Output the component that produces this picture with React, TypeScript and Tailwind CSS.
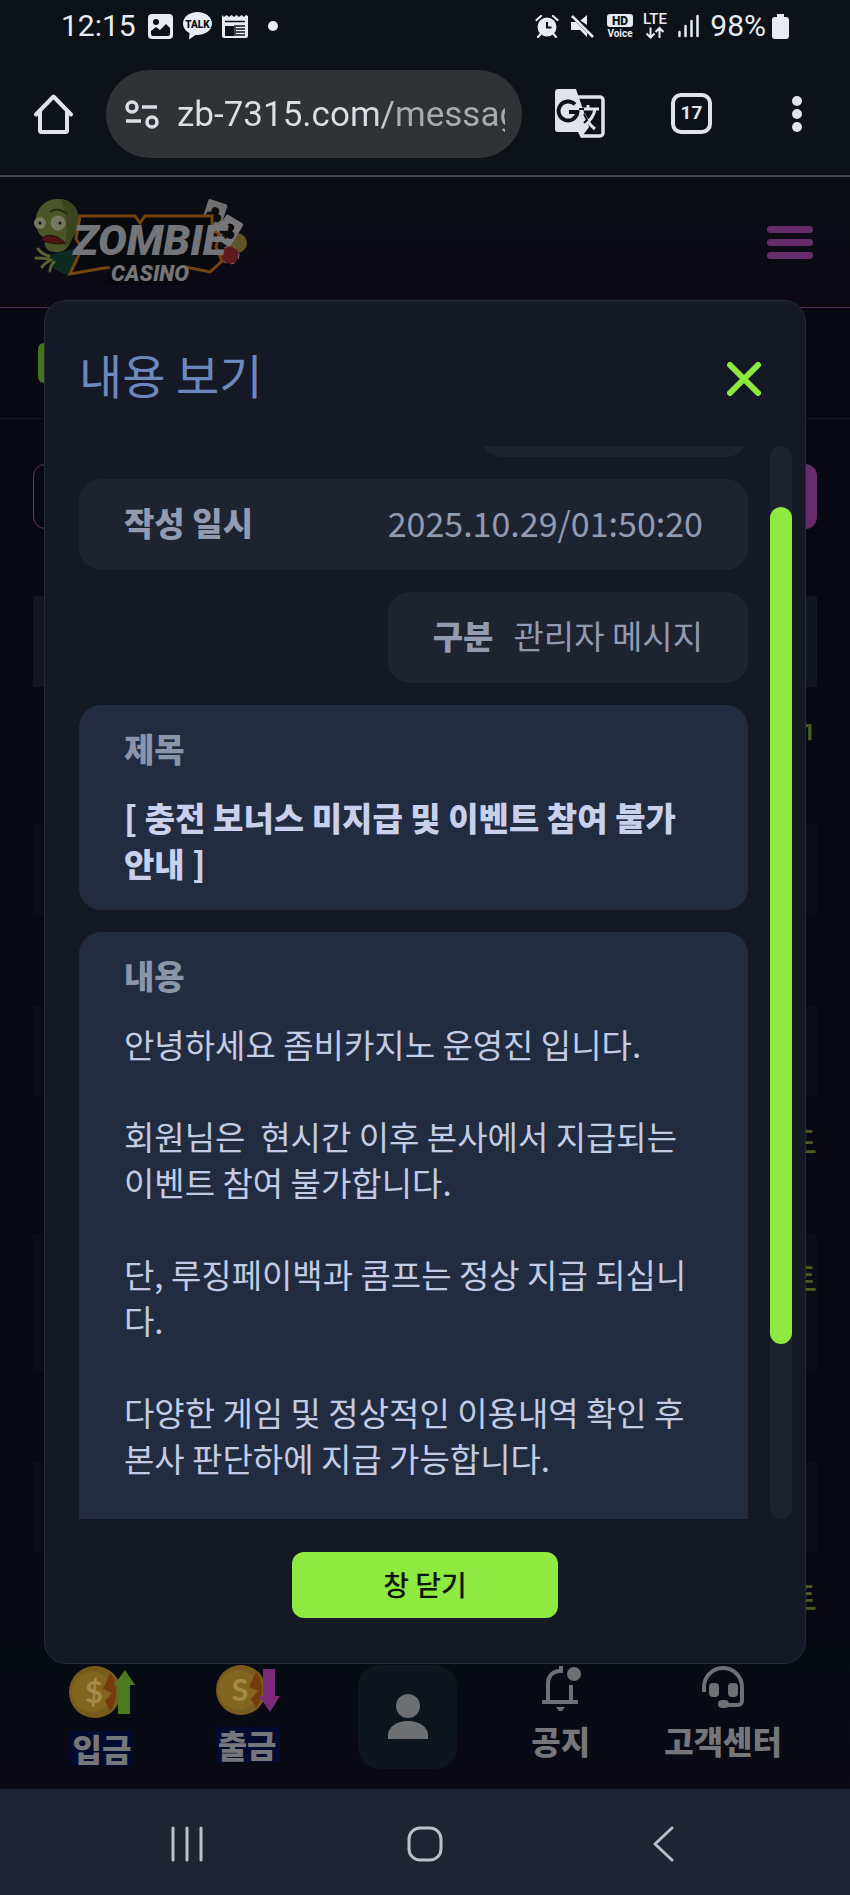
import { useState } from 'react';

const NOTICE_BODY = `안녕하세요 좀비카지노 운영진 입니다.

회원님은  현시간 이후 본사에서 지급되는 이벤트 참여 불가합니다.

단, 루징페이백과 콤프는 정상 지급 되십니다.

다양한 게임 및 정상적인 이용내역 확인 후 본사 판단하에 지급 가능합니다.`;

interface MessageRow {
  id: number;
  title: string;
  tall?: boolean;
}

const ROWS: MessageRow[] = [
  { id: 1, title: 'ㄱ', tall: true },
  { id: 2, title: '' },
  { id: 3, title: '' },
  { id: 4, title: '' },
  { id: 5, title: '드', tall: true },
  { id: 6, title: '트', tall: true },
  { id: 7, title: '' },
  { id: 8, title: '' },
  { id: 9, title: '트' },
];

function StatusBar() {
  return (
    <div className="flex h-[52px] items-center justify-between pr-[61px] pl-[61px] font-['Roboto',sans-serif] text-[30px] leading-none text-[#e8ebf2]">
      <div className="flex items-center">
        <span>12:15</span>
        <svg className="ml-3 h-[25px] w-[25px]" viewBox="0 0 25 25">
          <rect width="25" height="25" rx="4" fill="#e8ebf2" />
          <circle cx="8" cy="8" r="3" fill="#0d1118" />
          <path d="M3 20v-3l5-4 4 3 6-6 4 4v6a2 2 0 0 1-2 2H5a2 2 0 0 1-2-2z" fill="#0d1118" />
        </svg>
        <svg className="ml-[10px] h-7 w-[29px]" viewBox="0 0 29 28">
          <path d="M14.500 0C22.500 0 29 5 29 11.500S22.500 23 14.500 23h-2L6 27.500 6.500 21C2.500 19 0 15.500 0 11.500 0 5 6.500 0 14.500 0z" fill="#e8ebf2" />
          <text x="14.500" y="15.500" textAnchor="middle" fontSize="10" fontWeight="900" fontFamily="Roboto, sans-serif" fill="#0d1118">TALK</text>
        </svg>
        <svg className="ml-[10px] h-[25px] w-[26px]" viewBox="0 0 26 25" fill="#e8ebf2">
          <path d="M0 1l2 2 2.500-2L7 3l2.500-2L12 3l2.500-2L17 3l2.500-2L22 3l2-2 2 1v20a2 2 0 0 1-2 2H2a2 2 0 0 1-2-2z" />
          <path d="M3 7.500h20M13 11v11M14 12h9M14 15h9M14 18h9M14 21h9" stroke="#0d1118" strokeWidth="1.500" />
          <path d="M3 12h9v10H3z" fill="#0d1118" />
        </svg>
        <span className="ml-5 h-[10px] w-[10px] rounded-full bg-[#e8ebf2]" />
      </div>
      <div className="flex items-center">
        <svg className="h-6 w-6" viewBox="0 0 24 24" fill="#e8ebf2">
          <circle cx="12" cy="13" r="9.500" />
          <path d="M1.500 6 6 2M22.500 6 18 2M5.500 20 3 23M18.500 20l2.500 3" stroke="#e8ebf2" strokeWidth="2.200" strokeLinecap="round" />
          <path d="M12 8v5.500h4.500" stroke="#0d1118" strokeWidth="2" fill="none" />
        </svg>
        <svg className="ml-[11px] h-6 w-6" viewBox="0 0 24 24" fill="#e8ebf2">
          <path d="M17 1v10L10.500 6.500zM1 8h5l11 11v4l-7-7H1z" />
          <path d="M2 2l21 21" stroke="#e8ebf2" strokeWidth="2.500" />
        </svg>
        <svg className="ml-3 h-6 w-7" viewBox="0 0 28 24">
          <rect x="1" width="26" height="13" rx="3" fill="#e8ebf2" />
          <text x="14" y="10.500" textAnchor="middle" fontSize="12" fontWeight="900" fontFamily="Roboto, sans-serif" fill="#0d1118">HD</text>
          <text x="14" y="22.500" textAnchor="middle" fontSize="10" fontWeight="700" fontFamily="Roboto, sans-serif" fill="#e8ebf2">Voice</text>
        </svg>
        <svg className="ml-2 h-[26px] w-[26px] overflow-visible" viewBox="0 0 26 26">
          <text x="13" y="11" textAnchor="middle" fontSize="15" fontWeight="500" fontFamily="Roboto, sans-serif" fill="#e8ebf2">LTE</text>
          <path d="M8.500 14.500v10M4.500 20.500l4 4 4-4M17.500 25V15M13.500 19l4-4 4 4" stroke="#e8ebf2" strokeWidth="2" fill="none" />
        </svg>
        <svg className="ml-[9px] h-6 w-6" viewBox="0 0 24 24">
          <path d="M2.500 22v-4M8.500 22V12M14.500 22V7M20.500 22V2" stroke="#e8ebf2" strokeWidth="2.500" strokeLinecap="round" />
        </svg>
        <span className="ml-[9px]">98%</span>
        <svg className="ml-[6px] h-[25px] w-[17px]" viewBox="0 0 17 25">
          <path d="M5 0h7v3h2a3 3 0 0 1 3 3v16a3 3 0 0 1-3 3H3a3 3 0 0 1-3-3V6a3 3 0 0 1 3-3h2z" fill="#e8ebf2" />
        </svg>
      </div>
    </div>
  );
}

function BrowserBar() {
  return (
    <div className="flex h-[125px] items-center border-b-2 border-[#44474d] pr-[48px] pl-[33px]">
      <button aria-label="Home">
        <svg className="h-[42px] w-[42px]" viewBox="0 0 42 42" fill="none" stroke="#e0e3ea" strokeWidth="4" strokeLinejoin="round" strokeLinecap="round">
          <path d="M3 21.500 20.500 3.500 38 21.500M7 18v19.500a1.500 1.500 0 0 0 1.500 1.500h24a1.500 1.500 0 0 0 1.500-1.500V18" />
        </svg>
      </button>
      <div className="ml-[31px] flex h-[88px] min-w-0 flex-1 items-center rounded-full bg-[#303236] pr-[17px] pl-[18px]">
        <svg className="h-9 w-9 shrink-0" viewBox="0 0 36 36" fill="none" stroke="#dadde5" strokeWidth="3.500">
          <circle cx="8" cy="11" r="5" />
          <path d="M18 11h15M2 25h15" />
          <circle cx="28" cy="26" r="5" />
        </svg>
        <input
          aria-label="Address"
          className="ml-[17px] w-full min-w-0 bg-linear-to-r from-[#dcdfe6] from-60% to-[#a9abb1] to-68% bg-clip-text pt-[3px] font-['Roboto',sans-serif] text-[35px] text-transparent outline-none"
          defaultValue="zb-7315.com/message"
        />
      </div>
      <button className="ml-[33px]" aria-label="Translate">
        <svg className="h-[50px] w-[50px]" viewBox="0 0 50 50">
          <path d="M22 8h23a3 3 0 0 1 3 3v33a3 3 0 0 1-3 3H26" fill="none" stroke="#e0e3ea" strokeWidth="3.500" />
          <path d="M3 0h18l13 38-8 11-3-6H3a3 3 0 0 1-3-3V3a3 3 0 0 1 3-3z" fill="#e0e3ea" />
          <path d="M20 15.500a9.500 9.500 0 1 0 2.500 7.500H14" fill="none" stroke="#0d1118" strokeWidth="3.800" />
          <path d="M24 20h20M33 16v4M40 20c-1 8-6 13-12 17M29 25c2 6 6 11 11 15" fill="none" stroke="#e0e3ea" strokeWidth="3" />
          <path d="M24 20h5M29 25l3 6-3 3" fill="none" stroke="#0d1118" strokeWidth="2" />
        </svg>
      </button>
      <button className="ml-[66px] flex h-[41px] w-[41px] items-center justify-center rounded-[10px] border-4 border-[#e0e3ea] font-['Roboto',sans-serif] text-[19px] font-bold text-[#e0e3ea]">
        17
      </button>
      <button className="ml-[79px] flex w-[11px] flex-col items-center gap-[3px]" aria-label="More">
        <span className="h-[10px] w-[10px] rounded-full bg-[#e0e3ea]" />
        <span className="h-[10px] w-[10px] rounded-full bg-[#e0e3ea]" />
        <span className="h-[10px] w-[10px] rounded-full bg-[#e0e3ea]" />
      </button>
    </div>
  );
}

function Logo() {
  return (
    <svg className="h-[90px] w-[216px]" viewBox="0 0 216 90">
      {/* zombie */}
      <path d="M17 58l24-6 6 24-14 2-14-8z" fill="#0c2a20" />
      <path d="M4 20C7 6 18 1 28 2c13 1 20 11 18 24-1 9-5 14-8 20-3 7-9 10-16 9-8-1-10-5-9-14-6-2-10-9-9-21z" fill="#4a5627" />
      <path d="M28 2c13 1 20 11 18 24-1 9-5 14-8 20l-6 4c3-12 6-30-4-48z" fill="#38451f" />
      <circle cx="8" cy="26" r="6" fill="#77785f" />
      <circle cx="26" cy="26" r="7.500" fill="#77785f" />
      <circle cx="8" cy="26" r="1.500" fill="#12100c" />
      <circle cx="28" cy="26" r="1.500" fill="#12100c" />
      <path d="M18 15c6-4 12-2 17 2" stroke="#242c12" strokeWidth="2" fill="none" />
      <path d="M9 43c4-7 16-6 24 3-7 2-17 0-24-3z" fill="#501513" stroke="#1a0c0b" />
      <path d="M6 52c3 4 7 6 11 7M4 61c4 0 8 0 13 1M10 70c2-3 5-5 9-7M18 74c0-4 2-7 4-9" stroke="#59612f" strokeWidth="3" strokeLinecap="round" fill="none" />
      {/* cards and chips */}
      <circle cx="205" cy="46" r="10" fill="#5f5425" />
      <circle cx="198" cy="58" r="9" fill="#5e1a1d" stroke="#757575" strokeDasharray="4 5" />
      <g transform="rotate(18 182 18)">
        <rect x="172" y="4" width="20" height="27" rx="2" fill="#6f6f70" />
        <circle cx="182" cy="14" r="4" fill="#0c0c0e" />
        <circle cx="178" cy="20" r="4" fill="#0c0c0e" />
        <circle cx="186" cy="20" r="4" fill="#0c0c0e" />
        <path d="M182 16l3 10h-6z" fill="#0c0c0e" />
      </g>
      <g transform="rotate(32 196 34)">
        <rect x="186" y="20" width="20" height="27" rx="2" fill="#77777a" />
        <circle cx="196" cy="30" r="4" fill="#0c0c0e" />
        <circle cx="192" cy="36" r="4" fill="#0c0c0e" />
        <circle cx="200" cy="36" r="4" fill="#0c0c0e" />
        <path d="M196 32l3 10h-6z" fill="#0c0c0e" />
      </g>
      {/* wordmark plate */}
      <path d="M48 19h55l5 7 5-7h67v14l7 4-3 13 6 14-12 11-34-7-72 3-34 6 12-26-6-9z" fill="#08090d" stroke="#754410" strokeWidth="3" />
      <path d="M80 60h76l-5 28H74z" fill="#08090d" />
      <text x="41" y="58" fontSize="43" fontWeight="900" fontStyle="italic" fontFamily="Roboto, sans-serif" fill="#747578">ZOMBIE</text>
      <text x="79" y="84" fontSize="22" fontWeight="900" fontStyle="italic" fontFamily="Roboto, sans-serif" fill="#747578">CASINO</text>
    </svg>
  );
}

function MessageList() {
  return (
    <ul className="flex flex-col px-[33px]">
      {ROWS.map((row) => (
        <li key={row.id} className={`pt-5 text-right text-[32px] leading-[47px] font-medium text-[#4c5c22] even:bg-[#0b0e17] ${row.tall ? 'h-[137px]' : 'h-[91px]'}`}>
          {row.title}
        </li>
      ))}
    </ul>
  );
}

function TabBar() {
  const label = 'text-[32px] font-black leading-[35px] text-[#76777a]';
  return (
    <nav className="flex flex-1 items-start justify-between bg-linear-to-b from-[#060b12] to-[#0a0915] px-[68px] pt-[21px]">
      <a href="#deposit" className="flex flex-col items-center">
        <svg className="h-[54px] w-[68px]" viewBox="0 0 68 54">
          <circle cx="27" cy="27" r="26" fill="#7a5b1e" />
          <circle cx="24" cy="27" r="20" fill="#84651f" />
          <path d="M42 8c8 9 8 29 0 38l-5-10 7-8-9-4z" fill="#743c0d" />
          <text x="26" y="38" textAnchor="middle" fontSize="31" fontWeight="700" fontFamily="Lato, sans-serif" fill="#a58a4a">$</text>
          <path d="M57 5l10 15h-5v29H50V20h-4z" fill="#4c7a1f" />
        </svg>
        <span className={`${label} mt-3 bg-[#020a30] px-[3px]`}>입금</span>
      </a>
      <a href="#withdraw" className="flex flex-col items-center px-[3px]">
        <svg className="h-[54px] w-[68px]" viewBox="0 0 68 54">
          <circle cx="28" cy="25" r="25" fill="#7a5b1e" />
          <circle cx="25" cy="25" r="20" fill="#84651f" />
          <path d="M43 7c8 9 8 27 0 36l-5-9 7-8-9-4z" fill="#743c0d" />
          <text x="27" y="36" textAnchor="middle" fontSize="31" fontWeight="700" fontFamily="Lato, sans-serif" fill="#a58a4a">S</text>
          <path d="M50 4h12v27h5L57 47 46 31h4z" fill="#7b2b79" />
        </svg>
        <span className={`${label} mt-2 bg-[#020a30] px-[3px]`}>출금</span>
      </a>
      <a href="#mypage" aria-label="마이페이지" className="flex h-[104px] w-[99px] items-center justify-center rounded-[22px] bg-[#0f151c]">
        <svg className="h-[46px] w-[42px]" viewBox="0 0 42 46" fill="#6f7073">
          <circle cx="21" cy="12" r="12" />
          <path d="M1 45v-4c0-8 9-14 20-14s20 6 20 14v4z" />
        </svg>
      </a>
      <a href="#notice" className="flex flex-col items-center">
        <svg className="h-[46px] w-10" viewBox="0 0 40 46" fill="none" stroke="#6f7073" strokeWidth="4">
          <path d="M1 37h36M7 37V18c0-7 5-12 12-12h1V1M30 37V20" />
          <circle cx="33" cy="9" r="7" fill="#6f7073" stroke="none" />
          <path d="M15 42h9l-3 4h-3z" fill="#6f7073" stroke="none" />
        </svg>
        <span className={`${label} mt-3`}>공지</span>
      </a>
      <a href="#support" className="flex flex-col items-center">
        <svg className="h-[46px] w-11" viewBox="0 0 44 46" fill="none" stroke="#6f7073" strokeWidth="4">
          <path d="M3 27v-5a19 19 0 0 1 38 0v14a4 4 0 0 1-4 4H22" />
          <rect x="8" y="18" width="10" height="14" rx="4" fill="#6f7073" stroke="none" />
          <rect x="27" y="18" width="10" height="14" rx="4" fill="#6f7073" stroke="none" />
          <rect x="17" y="35" width="11" height="8" rx="4" fill="#6f7073" stroke="none" />
        </svg>
        <span className={`${label} mt-3`}>고객센터</span>
      </a>
    </nav>
  );
}

function MessageDialog({ onClose }: { onClose: () => void }) {
  return (
    <div className="absolute inset-0 flex px-[44px] pt-[123px] pb-[125px]">
      <section role="dialog" aria-labelledby="dialog-title" className="flex min-h-0 flex-1 flex-col rounded-[22px] border border-[#242a38] bg-[#151825]">
        <header className="flex h-[145px] items-center justify-between pt-[10px] pr-[44px] pl-[34px]">
          <h2 id="dialog-title" className="pb-[10px] text-[47px] leading-none font-normal text-[#6c89bd]">내용 보기</h2>
          <button onClick={onClose} aria-label="닫기">
            <svg className="h-[34px] w-[34px]" viewBox="0 0 34 34">
              <path d="M3 3l28 28M31 3 3 31" stroke="#8ee940" strokeWidth="6" strokeLinecap="round" />
            </svg>
          </button>
        </header>

        <div className="flex min-h-0 flex-1 gap-[22px] pr-[13px] pl-[34px]">
          <div className="flex min-h-0 flex-1 flex-col items-end gap-[22px] overflow-hidden text-[33px] leading-[47px] text-[#929bb2]">
            {/* sender card, scrolled almost out of view */}
            <div className="mt-[-80px] h-[91px] w-[268px] shrink-0 rounded-[22px] bg-[#1e2332]" />
            <div className="flex w-full shrink-0 justify-between rounded-[22px] bg-[#1e2332] px-[45px] pt-5 pb-6">
              <strong className="font-black">작성 일시</strong>
              <span className="text-[34px]">2025.10.29/01:50:20</span>
            </div>
            <div className="flex shrink-0 gap-5 rounded-[22px] bg-[#1e2332] px-[45px] pt-5 pb-6">
              <strong className="font-black">구분</strong>
              <span>관리자 메시지</span>
            </div>
            <div className="flex w-full shrink-0 flex-col gap-[22px] rounded-[22px] bg-[#222c40] px-[45px] pt-5 pb-6">
              <strong className="font-black text-[#8995a9]">제목</strong>
              <p className="leading-[46px] font-black text-[#c8d0ec]">[ 충전 보너스 미지급 및 이벤트 참여 불가 안내 ]</p>
            </div>
            <div className="flex w-full shrink-0 flex-col gap-[22px] rounded-[22px] bg-[#222c40] px-[45px] pt-5 pb-[90px]">
              <strong className="font-black text-[#8995a9]">내용</strong>
              <p className="leading-[46px] whitespace-pre-wrap text-[#c3cce4]">{NOTICE_BODY}</p>
            </div>
          </div>
          <div className="flex w-[22px] flex-col rounded-full bg-[#1e2230] pt-[61px] pb-[175px]">
            <div className="flex-1 rounded-full bg-[#8ee940]" />
          </div>
        </div>

        <footer className="flex justify-center pt-[33px] pb-[45px]">
          <button onClick={onClose} className="h-[66px] w-[266px] rounded-xl bg-[#8ee940] pb-[3px] text-[28px] leading-none font-medium text-[#0d160c]">
            창 닫기
          </button>
        </footer>
      </section>
    </div>
  );
}

export default function App() {
  const [isOpen, setIsOpen] = useState(true);

  return (
    <div className="flex min-h-screen flex-col bg-[#0d1118] font-['Noto_Sans_CJK_KR',sans-serif]">
      <StatusBar />
      <BrowserBar />

      <main className="relative flex flex-1 flex-col bg-[#080912]">
        <header className="flex h-[131px] items-center justify-between border-b border-[#54265a] bg-linear-to-b from-[#0a0e15] to-[#0c0915] pr-[37px] pl-[32px]">
          <Logo />
          <button className="flex w-[46px] flex-col gap-[6px]" aria-label="메뉴">
            <span className="h-[7px] w-full rounded-full bg-[#672d6b]" />
            <span className="h-[7px] w-full rounded-full bg-[#672d6b]" />
            <span className="h-[7px] w-full rounded-full bg-[#672d6b]" />
          </button>
        </header>

        <div className="flex h-[111px] items-center border-b border-[#171922] pl-[38px]">
          <span className="h-10 w-10 rounded-md border-[6px] border-[#43751f]" />
        </div>

        <div className="flex px-[33px] pt-[45px] pb-[67px]">
          <input aria-label="검색" className="h-[65px] w-full min-w-0 rounded-l-[12px] border border-[#66306a] bg-transparent" />
          <button className="h-[65px] w-[120px] shrink-0 rounded-r-[12px] bg-[#672d6b]" aria-label="검색하기" />
        </div>

        <div className="mx-[33px] h-[91px] bg-[#111620]" />
        <MessageList />
        <TabBar />

        {isOpen && <MessageDialog onClose={() => setIsOpen(false)} />}
      </main>

      <nav className="flex h-[106px] items-center justify-between bg-[#1e2433] px-[169px] pt-1">
        <button aria-label="Recents">
          <svg className="h-9 w-9" viewBox="0 0 36 36" stroke="#b9bfce" strokeWidth="3" strokeLinecap="round">
            <path d="M4 2v32M18 2v32M32 2v32" />
          </svg>
        </button>
        <button aria-label="Home screen">
          <svg className="h-9 w-9" viewBox="0 0 36 36" fill="none" stroke="#b9bfce" strokeWidth="3">
            <rect x="2" y="2" width="32" height="32" rx="11" />
          </svg>
        </button>
        <button aria-label="Back">
          <svg className="h-9 w-9" viewBox="0 0 36 36" fill="none" stroke="#b9bfce" strokeWidth="3" strokeLinecap="round" strokeLinejoin="round">
            <path d="M27 2 10 18l17 16" />
          </svg>
        </button>
      </nav>
    </div>
  );
}
